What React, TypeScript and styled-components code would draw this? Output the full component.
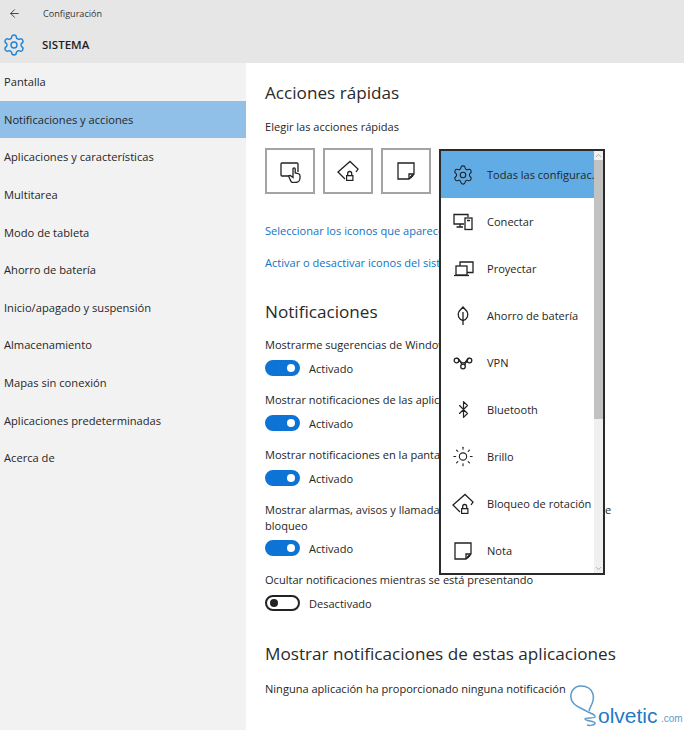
import React from 'react';
import styled, {createGlobalStyle} from 'styled-components';
import {ArrowLeft, Settings, Bluetooth, Sun, ChevronUp, ChevronDown} from 'lucide-react';

const GlobalStyle = createGlobalStyle`
  html, body {
    margin: 0;
    padding: 0;
    background: #ffffff;
  }
  body {
    font-family: "Open Sans", "Noto Sans", "Liberation Sans", sans-serif;
    color: #222222;
    overflow: hidden;
  }
`

const Page = styled.div`
  position: relative;
  width: 684px;
  height: 730px;
  overflow: hidden;
`

const Header = styled.header`
  height: 63px;
  background-color: #e6e6e6;
  display: flex;
  flex-direction: column;
`

const TopRow = styled.div`
  height: 26px;
  display: flex;
  align-items: center;
  padding-left: 8px;
  gap: 22px;
`

const WindowTitle = styled.span`
  font-size: 9.1px;
  color: #333333;
`

const SystemRow = styled.div`
  height: 37px;
  display: flex;
  align-items: center;
  padding-left: 2px;
  gap: 16px;
`

const SystemTitle = styled.span`
  font-size: 11.5px;
  font-weight: 600;
  color: #1f1f1f;
`

const Body = styled.div`
  display: flex;
  height: 667px;
`

const Sidebar = styled.nav`
  width: 246px;
  background-color: #f2f2f2;
  flex-shrink: 0;
`

const NavItem = styled.div<{$active?: boolean}>`
  height: 37.6px;
  display: flex;
  align-items: center;
  padding-left: 4px;
  font-size: 11.15px;
  color: #262626;
  background-color: ${props => props.$active ? '#90bfe8' : 'transparent'};
`

const Main = styled.main`
  flex: 1;
  padding: 18px 0 0 19px;
  min-width: 0;
`

const Heading = styled.h2<{$top?: number}>`
  margin: ${props => props.$top ?? 0}px 0 0;
  font-size: 17.15px;
  line-height: 24px;
  font-weight: 400;
  color: #2a2a2a;
  white-space: nowrap;
`

const Label = styled.div<{$top?: number}>`
  margin-top: ${props => props.$top ?? 0}px;
  font-size: 11.05px;
  line-height: 16px;
  color: #262626;
  max-width: 350px;
`

const Tiles = styled.div`
  display: flex;
  gap: 8px;
  margin-top: 13px;
`

const Tile = styled.div`
  width: 50px;
  height: 46px;
  box-sizing: border-box;
  border: 2px solid #a3a3a3;
  display: flex;
  align-items: center;
  justify-content: center;
`

const LinkText = styled.div<{$top: number}>`
  margin-top: ${props => props.$top}px;
  font-size: 11.05px;
  line-height: 16px;
  color: #0f72c4;
  white-space: nowrap;
`

const ToggleRow = styled.div<{$top: number}>`
  display: flex;
  align-items: center;
  gap: 9px;
  margin-top: ${props => props.$top}px;
  height: 18px;
  font-size: 11.05px;
  color: #262626;
`

const Track = styled.div<{$on: boolean}>`
  width: 35px;
  height: 16px;
  box-sizing: border-box;
  border-radius: 8px;
  padding: 0 3px;
  display: flex;
  align-items: center;
  justify-content: ${props => props.$on ? 'flex-end' : 'flex-start'};
  background-color: ${props => props.$on ? '#0d74d6' : '#ffffff'};
  border: 2px solid ${props => props.$on ? '#0d74d6' : '#222222'};
`

const Knob = styled.div<{$on: boolean}>`
  width: 8px;
  height: 8px;
  border-radius: 50%;
  background-color: ${props => props.$on ? '#ffffff' : '#222222'};
`

const Menu = styled.div`
  position: absolute;
  left: 439px;
  top: 149px;
  width: 166px;
  height: 426px;
  box-sizing: border-box;
  border: 2px solid #2a2a2a;
  background-color: #ffffff;
  display: flex;
`

const MenuList = styled.div`
  flex: 1;
  min-width: 0;
`

const MenuRow = styled.div<{$active?: boolean}>`
  height: 47px;
  display: flex;
  align-items: center;
  padding-left: 11px;
  gap: 13px;
  font-size: 11.05px;
  color: #262626;
  white-space: nowrap;
  overflow: hidden;
  background-color: ${props => props.$active ? '#62ace6' : 'transparent'};
`

const IconSlot = styled.span`
  width: 22px;
  height: 22px;
  display: flex;
  align-items: center;
  justify-content: center;
  flex-shrink: 0;
`

const Scrollbar = styled.div`
  width: 9px;
  background-color: #f0f0f0;
  display: flex;
  flex-direction: column;
  justify-content: space-between;
  position: relative;
  color: #9a9a9a;
`

const ScrollThumb = styled.div`
  position: absolute;
  left: 0;
  right: 0;
  top: 9px;
  height: 259px;
  background-color: #c2c2c2;
`

const Watermark = styled.div`
  position: absolute;
  left: 568px;
  top: 684px;
  width: 116px;
  height: 46px;
`

const WatermarkBubble = styled.svg`
  position: absolute;
  left: 0;
  top: 0;
`

const WatermarkName = styled.span`
  position: absolute;
  left: 30px;
  top: 17px;
  font-family: "Liberation Sans", sans-serif;
  font-size: 21px;
  line-height: 30px;
  color: #1f7ac4;
`

const WatermarkTld = styled.span`
  position: absolute;
  left: 93px;
  top: 28px;
  font-family: "Liberation Sans", sans-serif;
  font-size: 10px;
  line-height: 14px;
  color: #5c9bcc;
`

const line = {fill: 'none', stroke: '#222', strokeWidth: 1.3} as const;

const TouchIcon = () => (
    <svg width="24" height="24" viewBox="0 0 24 24" {...line}>
        <path d="M11 17H4a1 1 0 0 1-1-1V5a1 1 0 0 1 1-1h15a1 1 0 0 1 1 1v8"/>
        <path d="M13 22.500 11 18c-.5-1.200 1-2 2-1l2 1.500V10a1 1 0 0 1 2.200 0v4l3 .7c1.200.3 1.800 1 1.800 2.200V19a4.500 4.500 0 0 1-4.500 4.500H16a3.500 3.500 0 0 1-3-1z" fill="#fff"/>
    </svg>
)

const RotationIcon = () => (
    <svg width="22" height="22" viewBox="0 0 22 22" {...line}>
        <path d="M8 19 1 12 13 1.500 21 9l-2 3"/>
        <path d="M5 11.500h.01M7 14h.01" strokeWidth="1.600"/>
        <rect x="9" y="15" width="7.500" height="6" fill="#222" stroke="none"/>
        <rect x="10.200" y="16.300" width="5.100" height="3.500" fill="#fff" stroke="none"/>
        <path d="M10.700 15v-1.500a2 2 0 0 1 4 0V15"/>
    </svg>
)

const NoteIcon = () => (
    <svg width="22" height="22" viewBox="0 0 22 22" {...line}>
        <path d="M3 3h16v11l-5 5H3z"/>
        <path d="M14 19v-5h5"/>
        <path d="M15 18l3-3" strokeWidth="2"/>
    </svg>
)

const ConnectIcon = () => (
    <svg width="22" height="22" viewBox="0 0 22 22" {...line}>
        <path d="M12 13H2V3.500h14V6"/>
        <path d="M8 13v3M4.500 16H11"/>
        <rect x="13" y="7" width="7" height="11.500"/>
        <path d="M15 9.500h3M16.500 12v.01M16.500 15.500v.01" strokeWidth="1.600"/>
    </svg>
)

const ProjectIcon = () => (
    <svg width="22" height="22" viewBox="0 0 22 22" {...line}>
        <path d="M8 8V4h13v10.500h-6"/>
        <rect x="4" y="8" width="11" height="9" fill="#fff"/>
        <path d="M2 17.500h15"/>
    </svg>
)

const LeafIcon = () => (
    <svg width="22" height="22" viewBox="0 0 22 22" {...line}>
        <path d="M11 2 15 6.500a6 6 0 0 1-4 9 6 6 0 0 1-4-9z"/>
        <path d="M11 7v13"/>
    </svg>
)

const VpnIcon = () => (
    <svg width="22" height="22" viewBox="0 0 22 22" {...line}>
        <circle cx="4.500" cy="8.500" r="2.300"/>
        <circle cx="17.500" cy="8.500" r="2.300"/>
        <circle cx="11" cy="14.500" r="2.300"/>
        <path d="M6.700 9c2.300.5 3 2 5.300 2 2.500 0 2.300-4.500 5.500-4.800"/>
        <path d="M4.500 6.200c3 .2 4 3.300 5.400 6.300M15.200 9c-1 1-2 2-2.400 4"/>
    </svg>
)

const menuItems: {label: string; icon: React.ReactNode; active?: boolean}[] = [
    {label: 'Todas las configurac.', icon: <Settings size={24} strokeWidth={1.2} color="#222"/>, active: true},
    {label: 'Conectar', icon: <ConnectIcon/>},
    {label: 'Proyectar', icon: <ProjectIcon/>},
    {label: 'Ahorro de batería', icon: <LeafIcon/>},
    {label: 'VPN', icon: <VpnIcon/>},
    {label: 'Bluetooth', icon: <Bluetooth size={19} strokeWidth={1.5} color="#222"/>},
    {label: 'Brillo', icon: <Sun size={23} strokeWidth={1.2} color="#222"/>},
    {label: 'Bloqueo de rotación', icon: <RotationIcon/>},
    {label: 'Nota', icon: <NoteIcon/>},
]

const navItems = [
    'Pantalla',
    'Notificaciones y acciones',
    'Aplicaciones y características',
    'Multitarea',
    'Modo de tableta',
    'Ahorro de batería',
    'Inicio/apagado y suspensión',
    'Almacenamiento',
    'Mapas sin conexión',
    'Aplicaciones predeterminadas',
    'Acerca de',
]

const Toggle: React.FC<{on?: boolean; top?: number}> = ({on = true, top = 6}) => (
    <ToggleRow $top={top}>
        <Track $on={on}><Knob $on={on}/></Track>
        {on ? 'Activado' : 'Desactivado'}
    </ToggleRow>
)

const App: React.FC = () => {
    return (
        <Page>
            <GlobalStyle/>
            <Header>
                <TopRow>
                    <ArrowLeft size={13} strokeWidth={1.5} color="#222"/>
                    <WindowTitle>Configuración</WindowTitle>
                </TopRow>
                <SystemRow>
                    <Settings size={24} strokeWidth={1.4} color="#1f83d8"/>
                    <SystemTitle>SISTEMA</SystemTitle>
                </SystemRow>
            </Header>
            <Body>
                <Sidebar>
                    {navItems.map((item, i) => <NavItem key={item} $active={i === 1}>{item}</NavItem>)}
                </Sidebar>
                <Main>
                    <Heading>Acciones rápidas</Heading>
                    <Label $top={14}>Elegir las acciones rápidas</Label>
                    <Tiles>
                        <Tile><TouchIcon/></Tile>
                        <Tile><RotationIcon/></Tile>
                        <Tile><NoteIcon/></Tile>
                    </Tiles>
                    <LinkText $top={29}>Seleccionar los iconos que aparecen en la barra de tareas</LinkText>
                    <LinkText $top={16}>Activar o desactivar iconos del sistema</LinkText>
                    <Heading $top={29}>Notificaciones</Heading>
                    <Label $top={13}>Mostrarme sugerencias de Windows</Label>
                    <Toggle/>
                    <Label $top={15}>Mostrar notificaciones de las aplicaciones</Label>
                    <Toggle/>
                    <Label $top={15}>Mostrar notificaciones en la pantalla de bloqueo</Label>
                    <Toggle/>
                    <Label $top={15}>Mostrar alarmas, avisos y llamadas VoIP entrantes en la pantalla de bloqueo</Label>
                    <Toggle top={5}/>
                    <Label $top={15}>Ocultar notificaciones mientras se está presentando</Label>
                    <Toggle on={false}/>
                    <Heading $top={30}>Mostrar notificaciones de estas aplicaciones</Heading>
                    <Label $top={15}>Ninguna aplicación ha proporcionado ninguna notificación</Label>
                </Main>
            </Body>
            <Menu>
                <MenuList>
                    {menuItems.map(item => (
                        <MenuRow key={item.label} $active={item.active}>
                            <IconSlot>{item.icon}</IconSlot>
                            {item.label}
                        </MenuRow>
                    ))}
                </MenuList>
                <Scrollbar>
                    <ScrollThumb/>
                    <ChevronUp size={9} strokeWidth={2}/>
                    <ChevronDown size={9} strokeWidth={2}/>
                </Scrollbar>
            </Menu>
            <Watermark>
                <WatermarkBubble width="40" height="46" viewBox="0 0 40 46" fill="none" stroke="#5c9bcc" strokeWidth="1.500">
                    <path d="M21 27C22 22 27 18 25 10 23 4 18 2 13 2 6 2 2 8 3 14 4 22 14 24 20 28 24 30 28 31 27 33 26 35 17 33 17 35 17 37 27 37 27 39 27 41 22 42 19 41"/>
                </WatermarkBubble>
                <WatermarkName>olvetic</WatermarkName>
                <WatermarkTld>.com</WatermarkTld>
            </Watermark>
        </Page>
    );
};

export default App;
